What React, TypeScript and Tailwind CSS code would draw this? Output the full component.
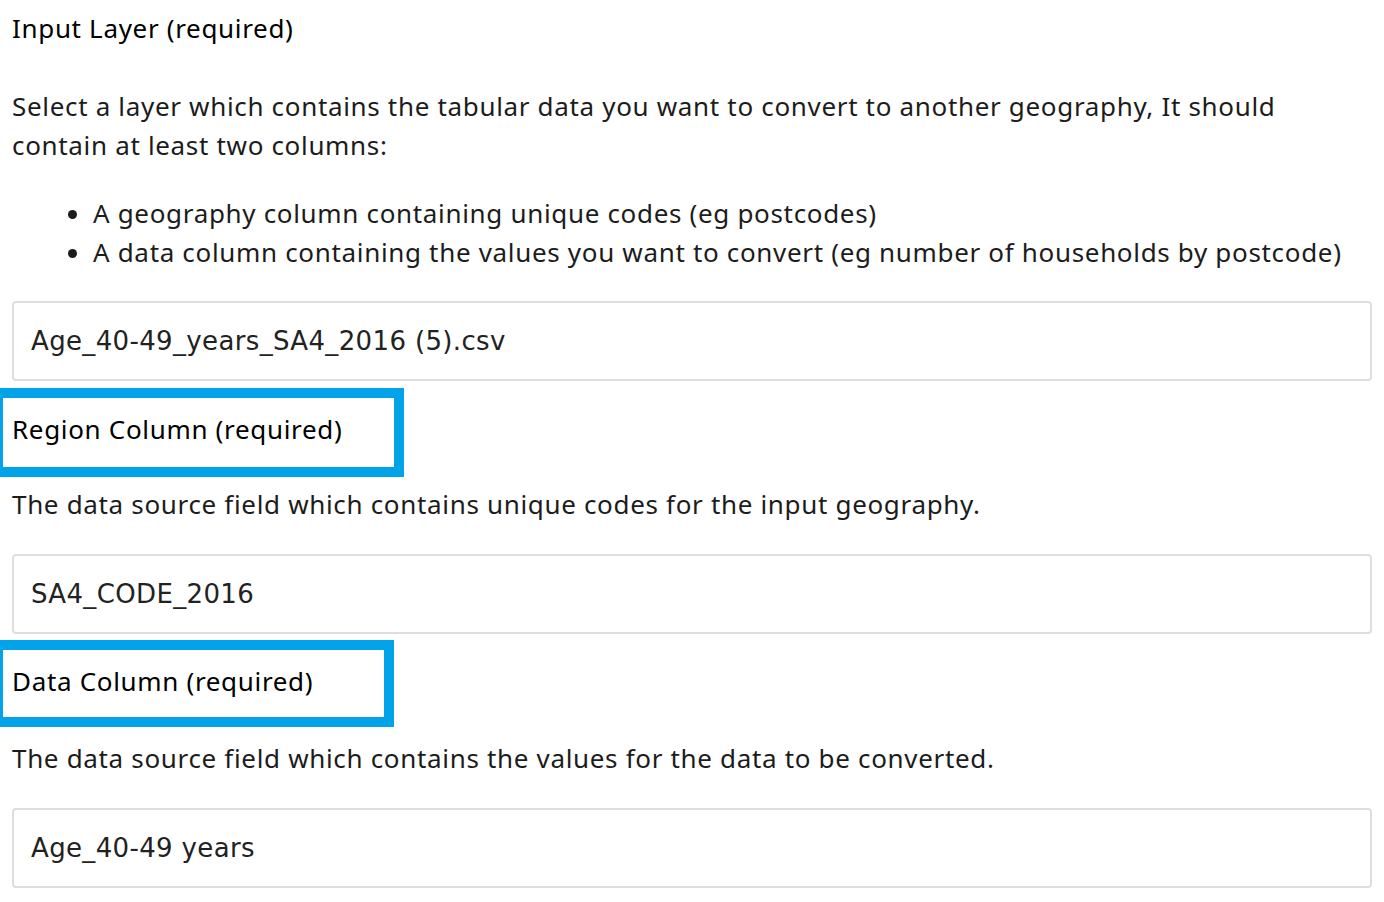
import React from "react";

const font = { fontFamily: "'Noto Sans', Lato, sans-serif" };

function Field({ value, className = "" }: { value: string; className?: string }) {
  return (
    <div
      className={`mx-[12px] h-[80px] rounded-[4px] border-2 border-[#dedede] bg-white flex items-center pl-[17px] text-[26px] tracking-[0.35px] text-[#222] ${className}`}
      style={{ fontFamily: "'DejaVu Sans', 'Noto Sans', sans-serif" }}
    >
      {value}
    </div>
  );
}

export default function App() {
  return (
    <div className="w-[1384px] h-[902px] bg-white text-[#1c1c1c] overflow-hidden text-[26px] leading-[39px] tracking-[0.67px]" style={font}>
      <div className="px-[12px] pt-[9px] text-black">Input Layer (required)</div>
      <p className="px-[12px] mt-[39px]">
        Select a layer which contains the tabular data you want to convert to another geography, It should
        <br />
        contain at least two columns:
      </p>
      <ul className="mt-[29px] pl-[93px] list-disc">
        <li>A geography column containing unique codes (eg postcodes)</li>
        <li>A data column containing the values you want to convert (eg number of households by postcode)</li>
      </ul>
      <Field value="Age_40-49_years_SA4_2016 (5).csv" className="mt-[29px]" />
      <div className="ml-[-7px] mt-[7px] w-[411px] h-[89px] border-[10px] border-[#03a3ea] flex items-center pl-[9px] pb-[7px] text-black">
        Region Column (required)
      </div>
      <p className="px-[12px] mt-[8px]">The data source field which contains unique codes for the input geography.</p>
      <Field value="SA4_CODE_2016" className="mt-[30px]" />
      <div className="ml-[-7px] mt-[6px] w-[401px] h-[87px] border-[10px] border-[#03a3ea] flex items-center pl-[9px] pb-[5px] text-black">
        Data Column (required)
      </div>
      <p className="px-[12px] mt-[12px]">The data source field which contains the values for the data to be converted.</p>
      <Field value="Age_40-49 years" className="mt-[30px]" />
    </div>
  );
}
